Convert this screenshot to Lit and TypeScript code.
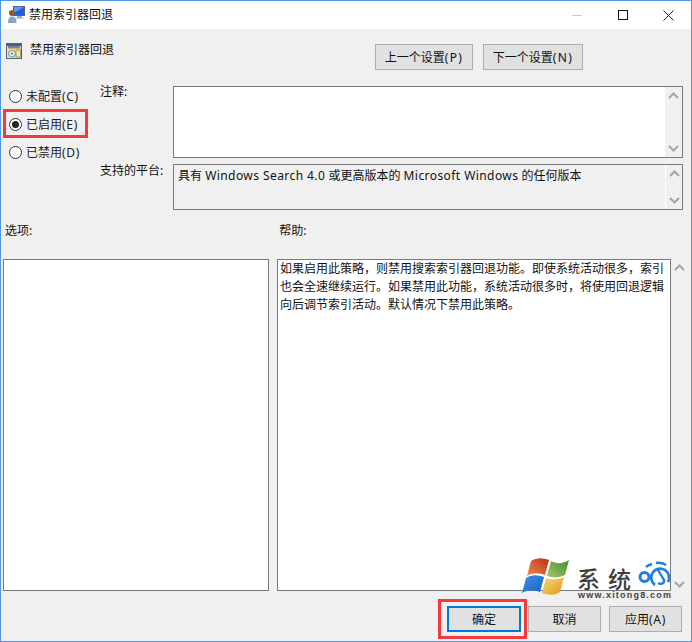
import { LitElement, html, css, svg } from "lit";
import { customElement } from "lit/decorators.js";

const up = svg`<svg class="chev" width="11" height="7" viewBox="0 0 11 7"><path d="M1 6 L5.5 1.5 L10 6" fill="none" stroke="#a6a6a6" stroke-width="2"/></svg>`;
const down = svg`<svg class="chev" width="11" height="7" viewBox="0 0 11 7"><path d="M1 1 L5.5 5.5 L10 1" fill="none" stroke="#a6a6a6" stroke-width="2"/></svg>`;

@customElement("app-root")
export class AppRoot extends LitElement {
  static styles = css`
    :host { display: block; width: 692px; height: 642px; font-family: "Noto Sans", "Noto Sans CJK SC", sans-serif; font-size: 12px; color: #111; }
    * { box-sizing: border-box; }
    .win { position: relative; width: 692px; height: 642px; border: 1px solid #4f97e8; background: #f0f0f0; overflow: hidden; display: flex; flex-direction: column; }
    .title { height: 28px; background: #fff; display: flex; align-items: center; padding-left: 7px; gap: 4px; flex: none; }
    .title span { flex: 1; padding-bottom: 2px; }
    .caps { display: flex; align-items: center; padding-right: 17px; gap: 35px; }
    .head { height: 57px; display: flex; padding: 15px 0 0 5px; flex: none; }
    .head .t { margin-left: 8px; margin-top: -4px; }
    .head .btns { margin-left: auto; margin-right: 108px; display: flex; gap: 10px; }
    button { font: inherit; color: #111; background: #e1e1e1; border: 1px solid #adadad; height: 26px; padding: 0 0 1px; margin: 0; }
    .p { letter-spacing: .7px; }
    .btns .p { letter-spacing: 1.4px; }
    .b-prev { width: 98px; } .b-next { width: 100px; }
    .cfg { display: flex; flex: none; }
    .radios { width: 99px; padding: 1px 0 0 8px; display: flex; flex-direction: column; gap: 12px; margin-top: 1px; }
    .radio { display: flex; align-items: center; gap: 4px; height: 16px; color: #222; }
    .dot { width: 13px; height: 13px; border: 1px solid #333; border-radius: 50%; background: #fff; display: flex; align-items: center; justify-content: center; }
    .dot i { width: 7px; height: 7px; border-radius: 50%; background: #222; }
    .fields { display: grid; grid-template-columns: 73px 510px; grid-template-rows: 72px 46px; row-gap: 6px; }
    .lab { line-height: 16px; margin-top: -2px; }
    .lab2 { margin-top: -1px; }
    .box { border: 1px solid #7a7a7a; background: #fff; display: flex; }
    .box .txt { flex: 1; padding: 2px 4px; line-height: 18px; white-space: nowrap; }
    .lat { letter-spacing: .43px; }
    .sb { width: 17px; display: flex; flex-direction: column; justify-content: space-between; align-items: center; padding: 5px 0; background: #f0f0f0; flex: none; }
    .box.ro { background: #f0f0f0; }
    .box.ro .sb { border-left: 1px solid #fff; }
    .caps2 { display: flex; height: 49px; padding: 11px 0 0 4px; flex: none; }
    .caps2 .h { margin-left: 247px; }
    .lists { display: flex; padding-left: 2px; flex: none; height: 332px; }
    .list { border: 1px solid #7a7a7a; background: #fff; height: 332px; }
    .opts { width: 266px; margin-right: 8px; }
    .help { width: 394px; padding: 0 2px; line-height: 18px; color: #111; }
    .help p { margin: 0; width: 390px; }
    .outer { width: 17px; display: flex; flex-direction: column; justify-content: space-between; align-items: center; padding: 5px 0 3px; }
    .foot { display: flex; padding: 15px 0 0 446px; flex: none; }
    .ok { width: 74px; border: 2px solid #0078d7; background: #e1e1e1; }
    .cancel { width: 73px; margin-left: 7px; }
    .apply { width: 73px; margin-left: 8px; }
    .mark { position: absolute; border: 3px solid #f4393c; pointer-events: none; }
    .m1 { left: 2px; top: 108px; width: 85px; height: 29px; }
    .m2 { left: 437px; top: 598px; width: 89px; height: 40px; }
    .wm { position: absolute; left: 520px; top: 555px; width: 155px; height: 45px; }
    .wm svg { position: absolute; left: 0; top: 0; }
    .wm .sys { position: absolute; left: 56px; top: 10px; font-family: "Noto Sans CJK SC", sans-serif; font-size: 23px; line-height: 24px; font-weight: 500; letter-spacing: 8px; color: #3f3f3f; white-space: nowrap; }
    .wm .url { position: absolute; left: 57px; top: 34px; font-family: "Liberation Sans", sans-serif; font-weight: 700; font-size: 9px; line-height: 10px; letter-spacing: 1.2px; color: #444; white-space: nowrap; }
  `;

  render() {
    return html`<div class="win">
      <div class="title">
        <svg width="17" height="18" viewBox="0 0 17 18">
          <rect x="5" y="0" width="12" height="10" fill="#52617f"/>
          <rect x="6" y="1" width="10" height="8" fill="#1f5fe0"/>
          <path d="M6 1H16L6 7Z" fill="#5a9af0"/>
          <rect x="9" y="10" width="5" height="2" fill="#a3abb8"/>
          <rect x="7" y="12" width="9" height="1" fill="#c6ccd6"/>
          <circle cx="4" cy="7" r="3" fill="#8a5f3a"/>
          <path d="M0 17 C0 12 1.5 10.5 4 10.5 C6.5 10.5 8.5 12 8.5 17 Z" fill="#84a6cc"/>
        </svg>
        <span>禁用索引器回退</span>
        <div class="caps">
          <svg width="11" height="11" viewBox="0 0 11 11"><path d="M0 5.5H10" stroke="#c9c9c9"/></svg>
          <svg width="10" height="10" viewBox="0 0 10 10"><rect x=".5" y=".5" width="9" height="9" fill="none" stroke="#111"/></svg>
          <svg width="11" height="11" viewBox="0 0 11 11"><path d="M.5 .5L10.5 10.5M10.5 .5L.5 10.5" stroke="#222" fill="none"/></svg>
        </div>
      </div>
      <div class="head">
        <svg width="16" height="16" viewBox="0 0 16 16" style="margin-top:-1px">
          <rect x=".5" y=".5" width="15" height="15" fill="#dfe3da" stroke="#4a6a70"/>
          <rect x="1" y="1" width="14" height="2" fill="#2f6f78"/>
          <rect x="2" y="3" width="12" height="2" fill="#8f76a8"/>
          <rect x="2" y="5" width="12" height="1" fill="#c9b067"/>
          <circle cx="6" cy="10.5" r="3.5" fill="#e6e6de" stroke="#8b948a"/>
          <circle cx="6" cy="10.5" r="1" fill="#5c7a80"/>
          <rect x="10" y="7" width="4.5" height="7" fill="#efe3a8" stroke="#8c8a5c" stroke-width=".8"/>
        </svg>
        <span class="t">禁用索引器回退</span>
        <div class="btns"><button class="b-prev">上一个设置<span class="p">(P)</span></button><button class="b-next">下一个设置<span class="p">(N)</span></button></div>
      </div>
      <div class="cfg">
        <div class="radios">
          <div class="radio"><span class="dot"></span><span>未配置<span class="p">(C)</span></span></div>
          <div class="radio"><span class="dot"><i></i></span><span>已启用<span class="p">(E)</span></span></div>
          <div class="radio"><span class="dot"></span><span>已禁用<span class="p">(D)</span></span></div>
        </div>
        <div class="fields">
          <div class="lab">注释:</div>
          <div class="box"><div class="txt"></div><div class="sb">${up}${down}</div></div>
          <div class="lab lab2">支持的平台:</div>
          <div class="box ro"><div class="txt">具有 <span class="lat">Windows Search 4.0</span> 或更高版本的 <span class="lat">Microsoft Windows</span> 的任何版本</div><div class="sb">${up}${down}</div></div>
        </div>
      </div>
      <div class="caps2"><span>选项:</span><span class="h">帮助:</span></div>
      <div class="lists">
        <div class="list opts"></div>
        <div class="list help"><p>如果启用此策略，则禁用搜索索引器回退功能。即使系统活动很多，索引也会全速继续运行。如果禁用此功能，系统活动很多时，将使用回退逻辑向后调节索引活动。默认情况下禁用此策略。</p></div>
        <div class="outer">${up}${down}</div>
      </div>
      <div class="foot">
        <button class="ok">确定</button>
        <button class="cancel">取消</button>
        <button class="apply">应用<span class="p">(A)</span></button>
      </div>
      <div class="mark m1"></div>
      <div class="mark m2"></div>
      <div class="wm">
        <svg width="155" height="45" viewBox="0 0 155 45">
          <defs>
            <linearGradient id="r" x1="1" y1="0" x2="0" y2="1"><stop offset="0" stop-color="#b8321c"/><stop offset="1" stop-color="#f08a4a"/></linearGradient>
            <linearGradient id="g" x1="1" y1="0" x2="0" y2="1"><stop offset="0" stop-color="#3f8a2e"/><stop offset="1" stop-color="#a8c870"/></linearGradient>
            <linearGradient id="b" x1="0" y1="0" x2="1" y2="1"><stop offset="0" stop-color="#3f8fe8"/><stop offset="1" stop-color="#1565c8"/></linearGradient>
            <linearGradient id="y" x1="0" y1="0" x2="1" y2="1"><stop offset="0" stop-color="#f8d878"/><stop offset="1" stop-color="#e09a18"/></linearGradient>
          </defs>
          <path d="M10 5 C16 1 22 2 28 4 L24 19 C18 17 12 16 6 20 Z" fill="url(#r)"/>
          <path d="M30 5 C36 8 42 8 48 4 L44 19 C38 22 32 22 26 20 Z" fill="url(#g)"/>
          <path d="M5 22 C11 18 17 19 23 21 L19 36 C13 34 7 33 1 37 Z" fill="url(#b)"/>
          <path d="M25 22 C31 24 37 24 43 21 L39 36 C33 40 27 39 21 37 Z" fill="url(#y)"/>
          <g fill="none" stroke="#1f7fe0">
            <circle cx="123.5" cy="21" r="4.5" stroke-width="3"/>
            <path d="M147 26 A9 9 0 1 0 134 29" stroke-width="2.8"/>
            <path d="M137 14 L143 24 C144 27 140 29 137 27" stroke-width="2.4"/>
            <path d="M125 11 A15 15 0 0 1 131 8" stroke-width="2.4"/>
            <path d="M135 7 A15 15 0 0 1 145 9" stroke-width="2.4"/>
          </g>
        </svg>
        <span class="sys">系统</span>
        <span class="url">www.xitong8.com</span>
      </div>
    </div>`;
  }
}
